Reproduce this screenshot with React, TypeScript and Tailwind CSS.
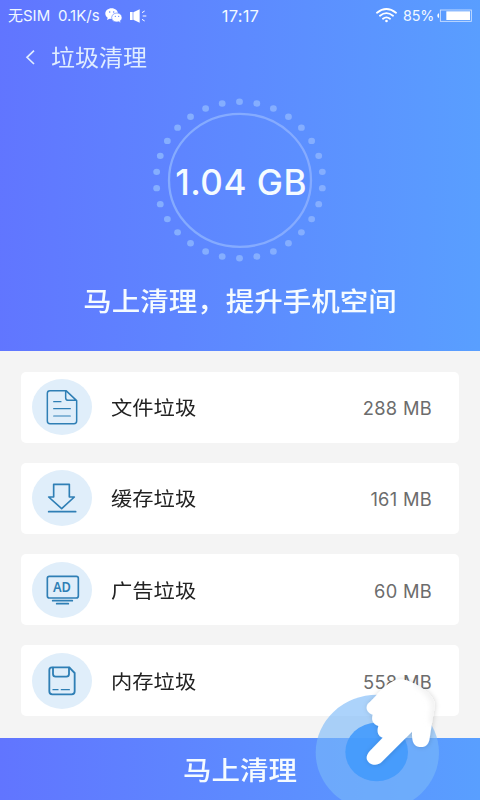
import type { ReactNode } from "react";

type JunkItem = {
    name: string;
    size: string;
    icon: ReactNode;
}

// 30 dots around the ring, one every 12 degrees
const dots = Array.from({ length: 30 }, (_, i) => {
    const angle = (i * 12 * Math.PI) / 180;
    return { x: 90 + 83.3 * Math.sin(angle), y: 85 - 78.2 * Math.cos(angle) };
});

const handPath = "M203 192C225 174 244 143 275 126C292 116 315 116 338 128C364 140 391 158 401 181C407 195 403 209 400 224L388 300C384 317 372 323 358 321C342 318 335 306 336 275L245 366C230 381 207 374 201 359C197 346 206 336 216 326L248 293C235 289 229 277 235 258C219 252 213 241 218 224C203 219 195 206 203 192Z";

const FileIcon = () => (
    <svg className="w-[60px] h-[56px]" viewBox="0 0 180 168" fill="none" stroke="#2f7fb5" strokeWidth="4.5" strokeLinecap="round" strokeLinejoin="round">
        <path d="M102 35H54q-8 0-8 8v83q0 8 8 8h72q8 0 8-8V65ZM101 36v20q0 8 8 8h24" />
        <path d="M65 68h22M65 89h50M65 111h50" strokeWidth="3.5" />
    </svg>
);

const CacheIcon = () => (
    <svg className="w-[60px] h-[56px]" viewBox="0 0 180 168" fill="none" stroke="#2f7fb5" strokeWidth="5" strokeLinecap="round" strokeLinejoin="round">
        <path d="M65 43h47v38h15L89 116 50 81h15Z" />
        <path d="M50 125h81" />
    </svg>
);

const AdIcon = () => (
    <svg className="w-[60px] h-[56px]" viewBox="0 0 180 168" fill="none" stroke="#2f7fb5" strokeWidth="5" strokeLinecap="round" strokeLinejoin="round">
        <rect x="46" y="43" width="93" height="65" rx="6" />
        <path d="M62 116h59M74 125h35" />
        <text x="90" y="91" textAnchor="middle" fill="#2f7fb5" stroke="none" fontSize="42" fontWeight="600" fontFamily="Noto Sans, sans-serif" textLength="54" lengthAdjust="spacingAndGlyphs">AD</text>
    </svg>
);

const MemoryIcon = () => (
    <svg className="w-[60px] h-[56px]" viewBox="0 0 180 168" fill="none" stroke="#2f7fb5" strokeWidth="5.5" strokeLinecap="round" strokeLinejoin="round">
        <path d="M112 43H60q-8 0-8 8v64q0 9 9 9h58q9 0 9-9V60Q119 51 112 43Z" />
        <path d="M63 44v19q0 8 8 8h32q8 0 8-8V44" />
        <path d="M63 110h15M88 110h24" strokeWidth="4" />
    </svg>
);

const items: JunkItem[] = [
    { name: "文件垃圾", size: "288 MB", icon: <FileIcon /> },
    { name: "缓存垃圾", size: "161 MB", icon: <CacheIcon /> },
    { name: "广告垃圾", size: "60 MB", icon: <AdIcon /> },
    { name: "内存垃圾", size: "558 MB", icon: <MemoryIcon /> },
];

const StatusBar = () => (
    <div className="grid grid-cols-[1fr_auto_1fr] items-center h-[30px] pl-2 pr-2 text-[#f1f8ff]">
        <div className="flex items-center text-[15px] leading-[30px] whitespace-nowrap">
            <span className="w-[45px]">无SIM</span>
            <span className="ml-[5px] w-[43px]">0.1K/s</span>
            <svg className="ml-[4px] w-[17px] h-[15px]" viewBox="0 0 51 45">
                <path fill="#fff" d="M20 1C9 1 1 8 1 17c0 5 3 9 7 12l-2 7 8-4 6 1c10 0 19-7 19-16S30 1 20 1Z" />
                <path fill="#fff" stroke="#6287ff" strokeWidth="2" d="M36 15c-9 0-16 6-16 14s7 13 16 13l5-1 6 3-1-6c3-2 5-6 5-9 0-8-7-14-15-14Z" />
                <g fill="#6287ff">
                    <circle cx="14" cy="12" r="2.4" />
                    <circle cx="26" cy="12" r="2.4" />
                    <circle cx="31" cy="25" r="2" />
                    <circle cx="41" cy="25" r="2" />
                </g>
            </svg>
            <svg className="ml-[8px] w-[17px] h-[14px]" viewBox="0 0 51 42">
                <path fill="#fff" d="M0 9h8v24H0ZM10 10 29 1v40L10 32Z" />
                <path stroke="#fff" strokeWidth="3" d="m36 11 8-5M38 21h11M36 31l8 5" />
            </svg>
        </div>
        <div className="text-[16.5px] leading-[30px] w-[40px] pl-[1px] pt-[1px] text-center tracking-[0.2px]">17:17</div>
        <div className="flex items-center justify-end">
            <svg className="w-[21px] h-[15px]" viewBox="0 0 63 45" fill="none" stroke="#fff" strokeWidth="5.5" strokeLinecap="round">
                <path d="M3 14Q31-8 60 14M12 23q19-15 39 0M21 32q10-8 21 0" />
                <circle cx="31.500" cy="39" r="4" fill="#fff" stroke="none" />
            </svg>
            <span className="ml-[6px] w-[31px] text-[14.3px] leading-[30px] tracking-[-0.2px]">85%</span>
            <svg className="ml-[3px] w-[35px] h-[13px]" viewBox="0 0 105 39">
                <path fill="#fff" d="M6 13v14q-5-1-5-7t5-7Z" />
                <rect x="10" y="3" width="93" height="34" fill="none" stroke="#fff" strokeOpacity="0.75" strokeWidth="2.5" />
                <rect x="28" y="7" width="71" height="26" fill="#fff" />
            </svg>
        </div>
    </div>
);

const TapHint = () => (
    <svg className="absolute left-[300px] top-[640px] w-[180px] h-[160px] pointer-events-none" viewBox="0 0 540 480">
        <defs>
            <filter id="handShadow" x="-20%" y="-20%" width="140%" height="140%">
                <feDropShadow dx="2" dy="0" stdDeviation="8" floodColor="#000" floodOpacity="0.16" />
            </filter>
            <filter id="soft">
                <feGaussianBlur stdDeviation="9" />
            </filter>
            <clipPath id="handClip">
                <path d={handPath} />
            </clipPath>
        </defs>
        <ellipse cx="232" cy="338" rx="185" ry="174" fill="#79b8f8" fillOpacity="0.62" />
        <ellipse cx="230" cy="336" rx="94" ry="88" fill="#429afc" fillOpacity="0.9" />
        <path filter="url(#handShadow)" fill="#fff" d={handPath} />
        <g clipPath="url(#handClip)">
            <path filter="url(#soft)" fill="none" stroke="#e8e8e8" strokeWidth="13" d="M345 125Q391 150 403 185Q408 205 398 250" />
        </g>
    </svg>
);

const App: React.FC = () => {
    return (
        <div className="relative w-[480px] h-[800px] overflow-hidden flex flex-col bg-[#f4f4f4] font-['Inter','Noto_Sans_CJK_SC',sans-serif]">
            <div className="h-[351px] shrink-0 flex flex-col bg-[linear-gradient(92deg,#6175ff_0%,#5d8aff_50%,#599fff_100%)] text-[#f5fbff]">
                <StatusBar />
                <div className="h-[54px] flex items-center pl-[25px] text-[#e0edff]">
                    <svg className="w-[11px] h-[15px]" viewBox="0 0 33 45" fill="none" stroke="currentColor" strokeWidth="5">
                        <path d="M27 2 6 22l21 20" />
                    </svg>
                    <h1 className="ml-[15px] mt-[4px] text-[24px] leading-[50px] scale-y-[0.93]">垃圾清理</h1>
                </div>
                <div className="mt-[11px] self-center w-[180px] h-[170px] grid place-items-center">
                    <svg className="col-start-1 row-start-1 w-[180px] h-[170px]" viewBox="0 0 180 170">
                        {dots.map((dot, i) => (
                            <ellipse key={i} cx={dot.x - 0.5} cy={dot.y} rx="3.4" ry="3.2" fill="#85aeff" />
                        ))}
                        <ellipse cx="90" cy="85.300" rx="71" ry="66.500" fill="none" stroke="#85abff" strokeWidth="2.300" />
                    </svg>
                    <div className="col-start-1 row-start-1 mt-[4px] ml-[2px] text-[35px] tracking-[0.5px] leading-none font-[450] whitespace-nowrap">1.04 GB</div>
                </div>
                <div className="mt-[12px] text-center text-[28.5px] leading-[50px] font-medium whitespace-nowrap scale-y-[0.93]">马上清理，提升手机空间</div>
            </div>
            <div className="flex-1 flex flex-col gap-[20.3px] pt-[20.5px] px-[21px]">
                {items.map((item) => (
                    <div key={item.name} className="h-[71px] shrink-0 flex items-center pl-[11px] pr-[27px] bg-white rounded-[5px]">
                        <div className="w-[60px] h-[56px] rounded-[50%] bg-[#e0eefa]">{item.icon}</div>
                        <div className="ml-[19px] mt-[2px] text-[21.300px] leading-[30px] text-[#222] scale-y-[0.93]">{item.name}</div>
                        <div className="ml-auto mt-[2px] text-[18.300px] tracking-[0.3px] leading-[24px] text-[#6c6c6c]">{item.size}</div>
                    </div>
                ))}
            </div>
            <button className="h-[62.5px] shrink-0 bg-[linear-gradient(90deg,#6175ff_0%,#5d8aff_50%,#599fff_100%)] text-[#f5fbff] text-[28.500px] font-medium">
                <span className="block mt-[3px] leading-[59px] scale-y-[0.93]">马上清理</span>
            </button>
            <TapHint />
        </div>
    );
}

export default App;
